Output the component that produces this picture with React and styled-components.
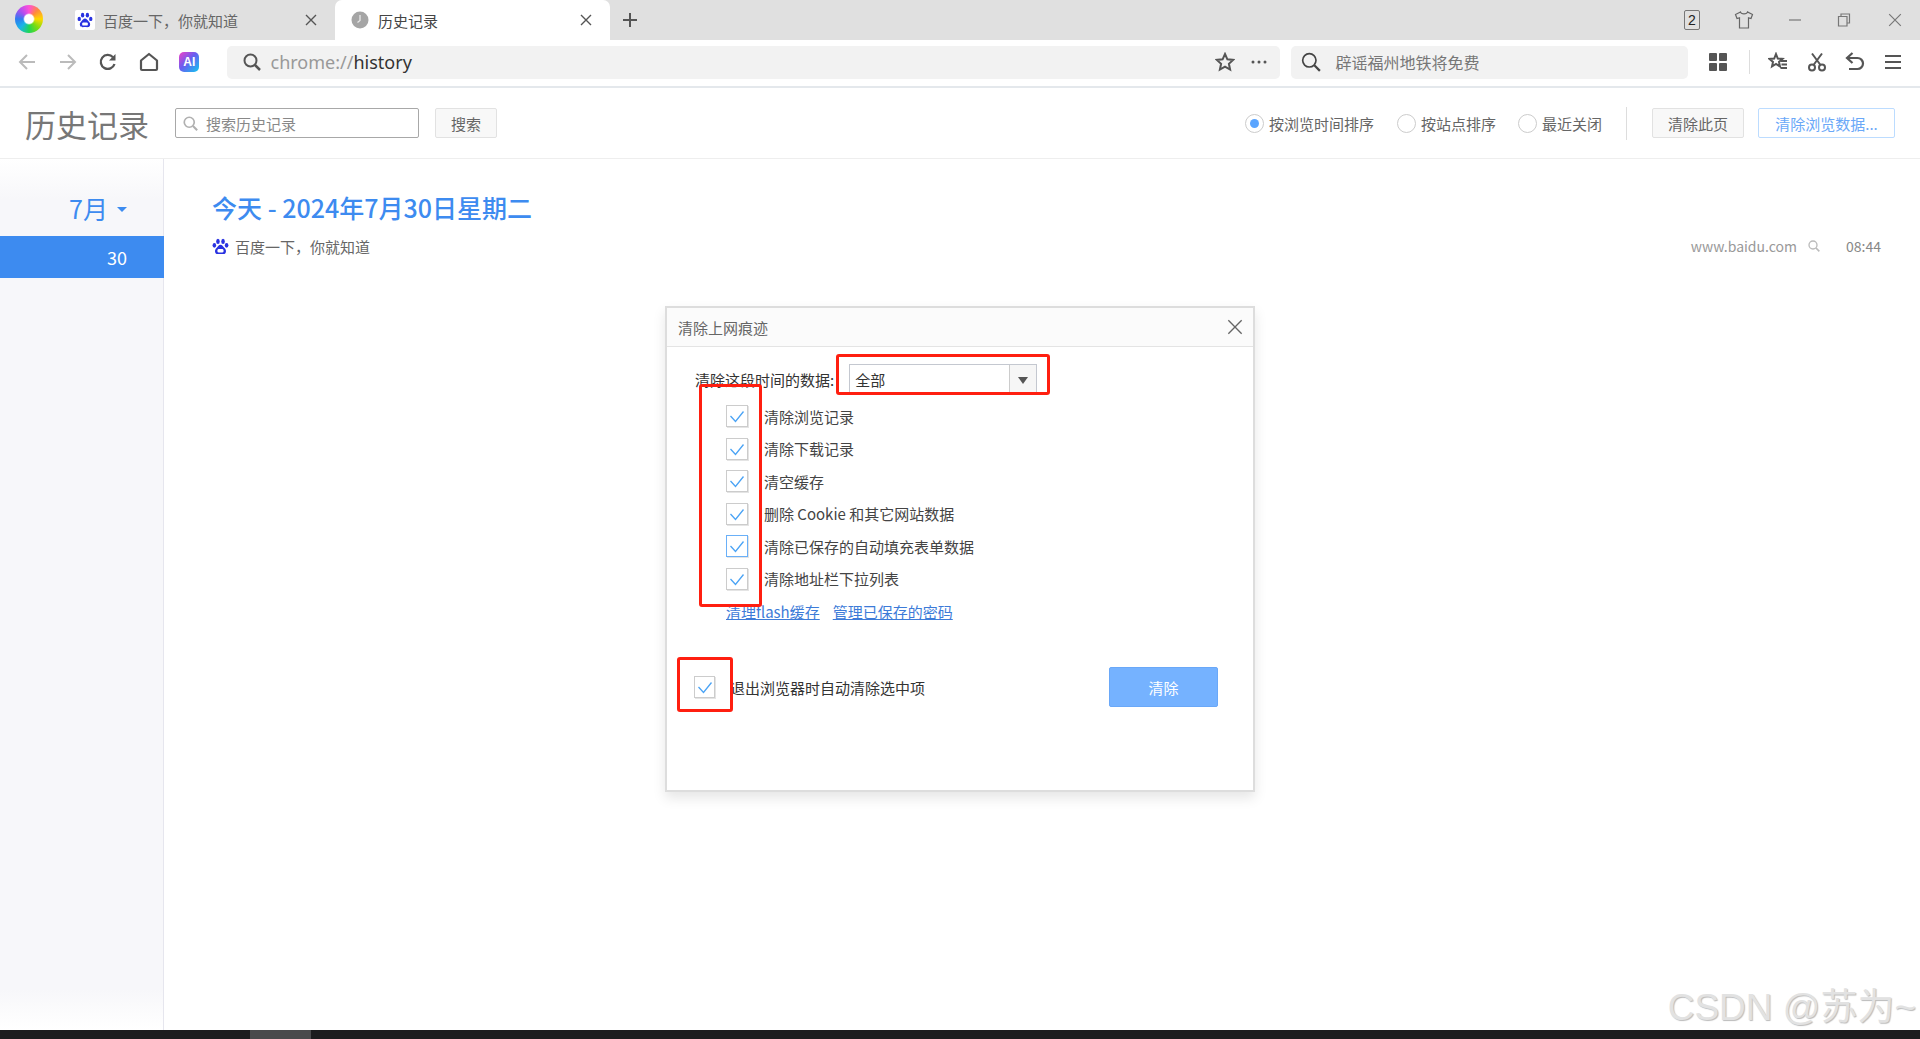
import React from 'react';
import styled, { createGlobalStyle } from 'styled-components';

const GlobalStyle = createGlobalStyle`
  html, body {
    margin: 0;
    padding: 0;
    background: #fff;
    overflow: hidden;
  }
  * {
    box-sizing: border-box;
  }
  body {
    font-family: "Noto Sans CJK SC", "Noto Sans", sans-serif;
  }
`;

const Page = styled.div`
  position: relative;
  width: 1920px;
  height: 1039px;
  display: flex;
  flex-direction: column;
  overflow: hidden;
  background: #fff;
`;

/* tab strip */
const TabStrip = styled.div`
  height: 40px;
  flex: none;
  display: flex;
  align-items: stretch;
  background: #e0e0e0;
  padding-left: 15px;
`;

const Swirl = styled.div`
  width: 28px;
  height: 28px;
  margin: 5px 17px 0 0;
  border-radius: 50%;
  background: radial-gradient(circle, #fff 0 22%, transparent 30%),
    conic-gradient(#ff4fd8, #ff8a3c, #ffd800, #7ddc10, #1fd655, #1ab5e8, #2f7bf0, #b04cf0, #ff4fd8);
  filter: blur(0.6px);
`;

const Tab = styled.div`
  width: 275px;
  display: flex;
  align-items: center;
  padding: 0 15px;
  font-size: 15px;
  color: ${(p) => (p.$active ? '#444' : '#666')};
  background: ${(p) => (p.$active ? '#fff' : 'transparent')};
  border-radius: ${(p) => (p.$active ? '7px 7px 0 0' : '0')};
`;

const TabIcon = styled.span`
  width: 20px;
  height: 20px;
  margin-right: 8px;
  display: flex;
  align-items: center;
  justify-content: center;
  background: ${(p) => (p.$white ? '#fff' : 'transparent')};
  border-radius: 2px;
`;

const TabTitle = styled.span`
  flex: 1;
`;

const TabClose = styled.span`
  display: flex;
  width: 12px;
  height: 12px;
  margin-right: 3px;
`;

const NewTab = styled.div`
  width: 40px;
  display: flex;
  align-items: center;
  justify-content: center;
`;

const WindowControls = styled.div`
  margin-left: auto;
  display: flex;
  align-items: center;
`;

const WindowButton = styled.div`
  width: ${(p) => p.$w || 50}px;
  display: flex;
  justify-content: center;
`;

const CountBadge = styled.div`
  width: 16px;
  height: 20px;
  border: 1px solid #777;
  border-radius: 2px;
  font: 14px/18px "Liberation Sans", sans-serif;
  text-align: center;
  color: #222;
`;

/* toolbar */
const Toolbar = styled.div`
  height: 48px;
  flex: none;
  display: flex;
  align-items: center;
  padding: 0 13px 2px 7px;
  background: #fff;
  border-bottom: 2px solid #e4e8ec;
`;

const ToolButton = styled.div`
  width: ${(p) => p.$w || 40.5}px;
  height: 33px;
  flex: none;
  display: flex;
  align-items: center;
  justify-content: center;
`;

const AiBadge = styled.div`
  width: 20px;
  height: 20px;
  border-radius: 5px;
  background: linear-gradient(135deg, #f040c8 0%, #6a5cf0 45%, #12c8f0 100%);
  color: #fff;
  font: 700 12px/20px "Liberation Sans", sans-serif;
  text-align: center;
`;

const AddressBar = styled.div`
  width: 1053px;
  height: 33px;
  flex: none;
  margin-left: 17px;
  display: flex;
  align-items: center;
  padding: 0 0 0 16px;
  background: #f2f2f2;
  border-radius: 5px;
`;

const Url = styled.div`
  flex: 1;
  margin-left: 10px;
  font-family: "Noto Sans", sans-serif;
  font-size: 18px;
  color: #999;
  span {
    color: #333;
  }
`;

const SearchBar = styled.div`
  width: 397px;
  height: 33px;
  flex: none;
  margin-left: 11px;
  display: flex;
  align-items: center;
  padding-left: 10px;
  background: #f2f2f2;
  border-radius: 5px;
  font-size: 16px;
  color: #777;
  svg {
    margin-right: 15px;
  }
`;

const ToolDivider = styled.div`
  width: 1px;
  height: 24px;
  flex: none;
  background: #ddd;
`;

/* history header */
const Header = styled.div`
  height: 71px;
  flex: none;
  display: flex;
  align-items: center;
  padding: 0 25px;
  border-bottom: 1px solid #eee;
`;

const PageTitle = styled.h1`
  margin: 0 25px 0 0;
  width: 125px;
  font-size: 31px;
  font-weight: 400;
  color: #777;
  white-space: nowrap;
`;

const SearchBox = styled.div`
  width: 244px;
  height: 30px;
  display: flex;
  align-items: center;
  padding-left: 7px;
  border: 1px solid #a8a8a8;
  border-radius: 2px;
  font-size: 15px;
  color: #888;
  svg {
    margin-right: 8px;
  }
`;

const HeadButton = styled.div`
  height: 30px;
  width: ${(p) => p.$w}px;
  margin-left: ${(p) => p.$ml || 0}px;
  display: flex;
  align-items: center;
  justify-content: center;
  border: 1px solid ${(p) => (p.$primary ? '#bcdcff' : '#e2e2e2')};
  border-radius: 2px;
  background: ${(p) => (p.$primary ? '#fff' : '#f8f8f8')};
  color: ${(p) => (p.$primary ? '#6aa8f8' : '#666')};
  font-size: 15px;
`;

const SortGroup = styled.div`
  margin-left: auto;
  display: flex;
  align-items: center;
`;

const Radio = styled.span`
  width: 19px;
  height: 19px;
  margin-right: 5px;
  border: 1px solid #ccc;
  border-radius: 50%;
  display: flex;
  align-items: center;
  justify-content: center;
  &::after {
    content: '';
    width: 9px;
    height: 9px;
    border-radius: 50%;
    background: ${(p) => (p.$checked ? '#5aa5ff' : 'transparent')};
  }
`;

const SortItem = styled.div`
  display: flex;
  align-items: center;
  margin-right: ${(p) => p.$mr}px;
  font-size: 15px;
  color: #666;
`;

const HeadDivider = styled.div`
  width: 1px;
  height: 33px;
  margin: 0 25px 0 0;
  background: #ddd;
`;

/* main area */
const Main = styled.div`
  flex: 1;
  display: flex;
  min-height: 0;
`;

const Sidebar = styled.div`
  width: 164px;
  flex: none;
  padding-top: 31px;
  border-right: 1px solid #e6e6ee;
  background: linear-gradient(#fff 0, #f7f7fa 40px, #f7f7fa calc(100% - 40px), #fff 100%);
`;

const MonthLabel = styled.div`
  height: 46px;
  display: flex;
  align-items: flex-start;
  justify-content: flex-end;
  padding-right: 36px;
  font-size: 25px;
  line-height: 36px;
  color: #3d8bf0;
  &::after {
    content: '';
    margin: 17px 0 0 9px;
    border: 5px solid transparent;
    border-top-color: #3d8bf0;
    border-bottom: 0;
  }
`;

const DayRow = styled.div`
  height: 42px;
  width: 164px;
  padding-right: 37px;
  text-align: right;
  font-size: 18px;
  line-height: 42px;
  color: #fff;
  background: #3d8bf0;
`;

const Content = styled.div`
  flex: 1;
  padding: 29px 39px 0 48px;
`;

const DayHeading = styled.h2`
  margin: 0 0 7px;
  font-size: 25px;
  line-height: 38px;
  font-weight: 500;
  color: #3d8bf0;
`;

const VisitRow = styled.div`
  display: flex;
  align-items: center;
  height: 26px;
  font-size: 15px;
  color: #666;
`;

const VisitTitle = styled.span`
  flex: 1;
  margin-left: 6px;
`;

const VisitHost = styled.span`
  font-size: 14px;
  color: #999;
  margin-right: 11px;
`;

const VisitTime = styled.span`
  margin-left: 26px;
  font-size: 14px;
  color: #888;
`;

/* dialog */
const Dialog = styled.div`
  position: absolute;
  left: 665px;
  top: 306px;
  width: 590px;
  height: 486px;
  display: flex;
  flex-direction: column;
  background: #fff;
  border: 2px solid #ddd;
  border-top-width: 2px;
  box-shadow: 0 6px 12px rgba(0, 0, 0, 0.1);
`;

const DialogHead = styled.div`
  height: 39px;
  flex: none;
  display: flex;
  align-items: center;
  justify-content: space-between;
  padding: 0 10px 0 11px;
  border-bottom: 1px solid #e4e4e4;
  background: #fbfbfb;
  font-size: 15px;
  color: #666;
`;

const DialogBody = styled.div`
  flex: 1;
  padding: 17px 0 0 59px;
  font-size: 15px;
  color: #444;
`;

const RangeRow = styled.div`
  display: flex;
  align-items: center;
  height: 30px;
  margin-left: -31px;
  color: #333;
`;

const RangeSelect = styled.div`
  width: 188px;
  height: 30px;
  margin-left: 15px;
  display: flex;
  align-items: center;
  padding-left: 5px;
  border: 1px solid #c4c8d0;
  span {
    flex: 1;
  }
`;

const SelectArrow = styled.div`
  width: 27px;
  height: 100%;
  display: flex;
  align-items: center;
  justify-content: center;
  border-left: 1px solid #ccc;
  background: #f6f6f6;
  &::after {
    content: '';
    margin-top: 3px;
    border: 5px solid transparent;
    border-top: 7px solid #555;
    border-bottom: 0;
  }
`;

const CheckList = styled.div`
  margin-top: 6px;
`;

const CheckRow = styled.div`
  display: flex;
  align-items: center;
  height: 32.5px;
`;

const CheckBox = styled.span`
  width: ${(p) => p.$size || 22}px;
  height: 22px;
  margin-right: ${(p) => p.$mr ?? 16}px;
  flex: none;
  display: flex;
  align-items: center;
  justify-content: center;
  border: 1px solid ${(p) => (p.$focus ? '#6ab0f8' : '#ccc')};
  box-shadow: 1px 1px 0 #e4e4e4;
`;

const LinkRow = styled.div`
  display: flex;
  gap: 13px;
  margin-top: 7px;
  height: 20px;
  line-height: 20px;
`;

const TextLink = styled.a`
  color: #3d7bd8;
  text-decoration: underline;
  white-space: nowrap;
`;

const ExitRow = styled.div`
  display: flex;
  align-items: center;
  margin: 45px 35px 0 -32px;
  height: 40px;
  color: #333;
`;

const ExitLabel = styled.span`
  flex: 1;
`;

const ClearButton = styled.div`
  width: 109px;
  height: 40px;
  display: flex;
  align-items: center;
  justify-content: center;
  border: 1px solid #6aa8f8;
  border-radius: 2px;
  background: #75b2ff;
  color: #fff;
`;

const RedMark = styled.div`
  position: absolute;
  left: ${(p) => p.$x}px;
  top: ${(p) => p.$y}px;
  width: ${(p) => p.$w}px;
  height: ${(p) => p.$h}px;
  border: 3px solid #ff1f10;
  border-radius: 3px;
`;

/* bottom */
const TaskBar = styled.div`
  height: 9px;
  flex: none;
  display: flex;
  background: #1c1c1e;
  padding-left: 250px;
`;

const TaskItem = styled.div`
  width: 61px;
  background: #4a4a4c;
`;

const Watermark = styled.div`
  position: absolute;
  right: 4px;
  top: 983px;
  font-family: "Liberation Sans", "Noto Sans CJK SC", sans-serif;
  font-size: 37px;
  line-height: 50px;
  color: #e2e2e2;
  text-shadow: 1px 1px 1px #bbb;
  white-space: nowrap;
`;

const Paw = ({ size = 16 }) => (
  <svg width={size} height={size} viewBox="0 0 20 20">
    <g fill="#2932e1">
      <ellipse cx="7" cy="4" rx="2.1" ry="3" />
      <ellipse cx="13" cy="4" rx="2.1" ry="3" />
      <ellipse cx="2.8" cy="8.6" rx="2.1" ry="2.8" />
      <ellipse cx="17.2" cy="8.6" rx="2.1" ry="2.8" />
      <path d="M10 8c-2 0-3 2-4.400 3.500C4 13 2.800 15 4 17.500 5 19.500 8 18.800 10 18.800s5 .7 6-1.300c1.200-2.500 0-4.500-1.600-6C13 10 12 8 10 8z" />
    </g>
    <rect x="6.500" y="13" width="7" height="4" rx="1.500" fill="#fff" />
  </svg>
);

const Clock = () => (
  <svg width="18" height="18" viewBox="0 0 18 18">
    <circle cx="9" cy="9" r="8.500" fill="#a5a5a5" />
    <path d="M9 4v5.500l-2.500 2" fill="none" stroke="#e8e8e8" strokeWidth="1.300" />
  </svg>
);

const Cross = ({ size = 12, color = '#555', width = 1.4 }) => (
  <svg width={size} height={size} viewBox="0 0 12 12">
    <path d="M1 1l10 10M11 1L1 11" stroke={color} strokeWidth={width} fill="none" />
  </svg>
);

const Arrow = ({ flip }) => (
  <svg width="20" height="20" viewBox="0 0 20 20" style={flip ? { transform: 'scaleX(-1)' } : undefined}>
    <path d="M18 10H3M10 3l-7 7 7 7" fill="none" stroke="#bbb" strokeWidth="2" />
  </svg>
);

const Loupe = ({ size = 18, color = '#555', width = 2 }) => (
  <svg width={size} height={size} viewBox="0 0 18 18">
    <circle cx="7.500" cy="7.500" r="6" fill="none" stroke={color} strokeWidth={width} />
    <path d="M12 12l5 5" stroke={color} strokeWidth={width + 0.5} />
  </svg>
);

const Check = ({ size = 16 }) => (
  <svg width={size} height={size} viewBox="0 0 16 16">
    <path d="M1.500 8l5 5.500L14.500 3.500" fill="none" stroke="#4aa3f5" strokeWidth="1.300" />
  </svg>
);

const clearOptions = [
  '清除浏览记录',
  '清除下载记录',
  '清空缓存',
  '删除 Cookie 和其它网站数据',
  '清除已保存的自动填充表单数据',
  '清除地址栏下拉列表',
];

export default function App() {
  return (
    <Page>
      <GlobalStyle />
      <TabStrip>
        <Swirl />
        <Tab>
          <TabIcon $white>
            <Paw />
          </TabIcon>
          <TabTitle>百度一下，你就知道</TabTitle>
          <TabClose>
            <Cross />
          </TabClose>
        </Tab>
        <Tab $active>
          <TabIcon>
            <Clock />
          </TabIcon>
          <TabTitle>历史记录</TabTitle>
          <TabClose>
            <Cross />
          </TabClose>
        </Tab>
        <NewTab>
          <svg width="16" height="16" viewBox="0 0 16 16">
            <path d="M8 1v14M1 8h14" stroke="#555" strokeWidth="2" />
          </svg>
        </NewTab>
        <WindowControls>
          <WindowButton $w={52}>
            <CountBadge>2</CountBadge>
          </WindowButton>
          <WindowButton $w={52}>
            <svg width="20" height="20" viewBox="0 0 20 20">
              <path d="M6.500 2L1.500 4.500l1.500 4 2.500-.7V18h9V7.800l2.500.7 1.500-4L13.500 2c-.5 2.500-6.500 2.500-7 0z" fill="none" stroke="#666" strokeWidth="1.200" />
            </svg>
          </WindowButton>
          <WindowButton $w={49}>
            <svg width="14" height="14" viewBox="0 0 14 14">
              <path d="M1 7h12" stroke="#777" strokeWidth="1.200" />
            </svg>
          </WindowButton>
          <WindowButton $w={50}>
            <svg width="14" height="14" viewBox="0 0 14 14">
              <path d="M4 3V1h8.500v9H10M1.500 3.500H10V13H1.500z" fill="none" stroke="#777" strokeWidth="1.200" />
            </svg>
          </WindowButton>
          <WindowButton $w={51}>
            <Cross size={14} color="#777" width={1} />
          </WindowButton>
        </WindowControls>
      </TabStrip>

      <Toolbar>
        <ToolButton>
          <Arrow />
        </ToolButton>
        <ToolButton>
          <Arrow flip />
        </ToolButton>
        <ToolButton>
          <svg width="20" height="20" viewBox="0 0 20 20">
            <path d="M16.500 12a7 7 0 1 1-1.500-6.800" fill="none" stroke="#555" strokeWidth="2.300" />
            <path d="M17.500 2v6.500H11z" fill="#555" />
          </svg>
        </ToolButton>
        <ToolButton>
          <svg width="20" height="20" viewBox="0 0 20 20">
            <path d="M2 8.500L10 2l8 6.500V17a1 1 0 0 1-1 1H3a1 1 0 0 1-1-1z" fill="none" stroke="#555" strokeWidth="2.200" strokeLinejoin="round" />
          </svg>
        </ToolButton>
        <ToolButton>
          <AiBadge>AI</AiBadge>
        </ToolButton>
        <AddressBar>
          <Loupe />
          <Url>
            chrome://<span>history</span>
          </Url>
          <ToolButton $w={26}>
            <svg width="20" height="20" viewBox="0 0 20 20">
              <path d="M10 2l2.400 5.300 5.800.6-4.300 3.900 1.200 5.700L10 14.600l-5.100 2.900 1.200-5.700L1.800 7.900l5.800-.6z" fill="none" stroke="#555" strokeWidth="2" />
            </svg>
          </ToolButton>
          <ToolButton $w={42}>
            <svg width="16" height="4" viewBox="0 0 16 4">
              <g fill="#555">
                <circle cx="2" cy="2" r="1.500" />
                <circle cx="8" cy="2" r="1.500" />
                <circle cx="14" cy="2" r="1.500" />
              </g>
            </svg>
          </ToolButton>
        </AddressBar>
        <SearchBar>
          <Loupe size={20} color="#444" width={1.5} />
          辟谣福州地铁将免费
        </SearchBar>
        <ToolButton $w={61}>
          <svg width="18" height="18" viewBox="0 0 18 18">
            <g fill="#555">
              <rect width="8" height="8" rx="1" />
              <rect x="10" width="8" height="8" rx="1" />
              <rect y="10" width="8" height="8" rx="1" />
              <rect x="10" y="10" width="8" height="8" rx="1" />
            </g>
          </svg>
        </ToolButton>
        <ToolDivider />
        <ToolButton $w={56}>
          <svg width="20" height="20" viewBox="0 0 20 20">
            <path d="M8 2l1.800 4.500 4.700.4-3.500 3 1 4.600L8 12l-4 2.500 1-4.600-3.500-3 4.700-.4z" fill="none" stroke="#555" strokeWidth="2" />
            <path d="M13 9h6M13.500 12.500H19M12.500 16H19" stroke="#555" strokeWidth="1.800" />
          </svg>
        </ToolButton>
        <ToolButton $w={22}>
          <svg width="20" height="20" viewBox="0 0 20 20">
            <circle cx="5" cy="15.500" r="3" fill="none" stroke="#555" strokeWidth="2" />
            <circle cx="15" cy="15.500" r="3" fill="none" stroke="#555" strokeWidth="2" />
            <path d="M6.500 13L15 1.500M13.500 13L5 1.500" stroke="#555" strokeWidth="2" />
          </svg>
        </ToolButton>
        <ToolButton $w={54}>
          <svg width="20" height="20" viewBox="0 0 20 20">
            <path d="M3 6h9.500a5 5 0 0 1 0 11H4" fill="none" stroke="#555" strokeWidth="2.200" />
            <path d="M7.500 1L2 6l5.500 5" fill="none" stroke="#555" strokeWidth="2.200" />
          </svg>
        </ToolButton>
        <ToolButton $w={22}>
          <svg width="16" height="16" viewBox="0 0 16 16">
            <path d="M0 2h16M0 8h16M0 14h16" stroke="#555" strokeWidth="2" />
          </svg>
        </ToolButton>
      </Toolbar>

      <Header>
        <PageTitle>历史记录</PageTitle>
        <SearchBox>
          <Loupe size={15} color="#b0b0b0" width={2} />
          搜索历史记录
        </SearchBox>
        <HeadButton $w={62} $ml={16}>
          搜索
        </HeadButton>
        <SortGroup>
          <SortItem $mr={23}>
            <Radio $checked />
            按浏览时间排序
          </SortItem>
          <SortItem $mr={22}>
            <Radio />
            按站点排序
          </SortItem>
          <SortItem $mr={24}>
            <Radio />
            最近关闭
          </SortItem>
          <HeadDivider />
          <HeadButton $w={92}>清除此页</HeadButton>
          <HeadButton $w={137} $ml={14} $primary>
            清除浏览数据...
          </HeadButton>
        </SortGroup>
      </Header>

      <Main>
        <Sidebar>
          <MonthLabel>7月</MonthLabel>
          <DayRow>30</DayRow>
        </Sidebar>
        <Content>
          <DayHeading>今天 - 2024年7月30日星期二</DayHeading>
          <VisitRow>
            <Paw size={17} />
            <VisitTitle>百度一下，你就知道</VisitTitle>
            <VisitHost>www.baidu.com</VisitHost>
            <Loupe size={12} color="#bbb" />
            <VisitTime>08:44</VisitTime>
          </VisitRow>
        </Content>
      </Main>

      <TaskBar>
        <TaskItem />
      </TaskBar>

      <Dialog>
        <DialogHead>
          清除上网痕迹
          <Cross size={16} color="#666" width={1} />
        </DialogHead>
        <DialogBody>
          <RangeRow>
            清除这段时间的数据:
            <RangeSelect>
              <span>全部</span>
              <SelectArrow />
            </RangeSelect>
          </RangeRow>
          <CheckList>
            {clearOptions.map((label, i) => (
              <CheckRow key={label}>
                <CheckBox $focus={i === 4}>
                  <Check />
                </CheckBox>
                {label}
              </CheckRow>
            ))}
          </CheckList>
          <LinkRow>
            <TextLink>清理flash缓存</TextLink>
            <TextLink>管理已保存的密码</TextLink>
          </LinkRow>
          <ExitRow>
            <CheckBox $size={21} $mr={15}>
              <Check />
            </CheckBox>
            <ExitLabel>退出浏览器时自动清除选中项</ExitLabel>
            <ClearButton>清除</ClearButton>
          </ExitRow>
        </DialogBody>
        <RedMark $x={169} $y={46} $w={214} $h={41} />
        <RedMark $x={32} $y={76} $w={63} $h={223} />
        <RedMark $x={10} $y={349} $w={56} $h={55} />
      </Dialog>

      <Watermark>CSDN @苏为~</Watermark>
    </Page>
  );
}
